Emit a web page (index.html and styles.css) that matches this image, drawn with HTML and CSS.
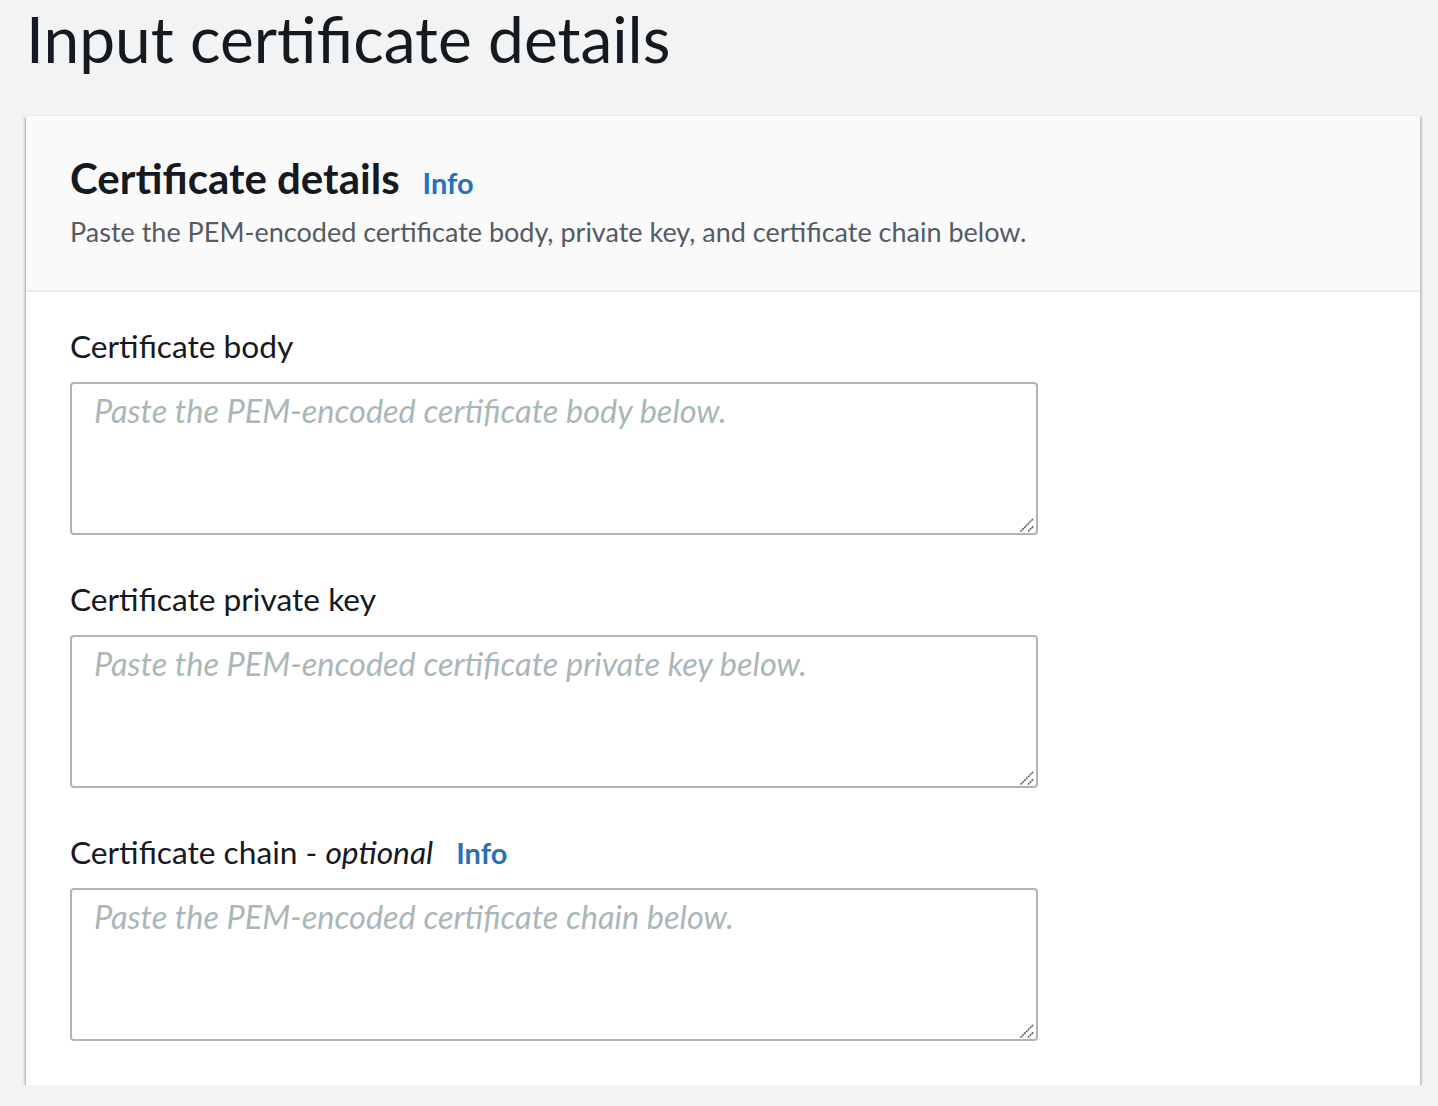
FILE: index.html
```html
<!DOCTYPE html>
<html lang="en">
<head>
<meta charset="utf-8">
<title>Input certificate details</title>
<link rel="stylesheet" href="styles.css">
</head>
<body>
<main class="page">
  <h1 class="page-title">Input certificate details</h1>
  <section class="card">
    <header class="card-header">
      <div class="card-title-row">
        <h2 class="card-title">Certificate details</h2>
        <a class="info-link" href="#">Info</a>
      </div>
      <p class="card-desc">Paste the PEM-encoded certificate body, private key, and certificate chain below.</p>
    </header>
    <div class="card-body">
      <div class="field">
        <label class="field-label" for="body">Certificate body</label>
        <div class="input-wrap">
          <textarea id="body" class="field-input" placeholder="Paste the PEM-encoded certificate body below."></textarea>
          <svg class="resize-grip" width="16" height="16" viewBox="0 0 16 16" aria-hidden="true"><path d="M1.5 14.5 L14.5 1.5 M9 14.5 L14.5 9" stroke="#5f6262" stroke-width="1.6" stroke-dasharray="2 0.6" fill="none"/></svg>
        </div>
      </div>
      <div class="field">
        <label class="field-label" for="key">Certificate private key</label>
        <div class="input-wrap">
          <textarea id="key" class="field-input" placeholder="Paste the PEM-encoded certificate private key below."></textarea>
          <svg class="resize-grip" width="16" height="16" viewBox="0 0 16 16" aria-hidden="true"><path d="M1.5 14.5 L14.5 1.5 M9 14.5 L14.5 9" stroke="#5f6262" stroke-width="1.6" stroke-dasharray="2 0.6" fill="none"/></svg>
        </div>
      </div>
      <div class="field">
        <div class="field-label-row">
          <label class="field-label" for="chain">Certificate chain - <i>optional</i></label>
          <a class="info-link" href="#">Info</a>
        </div>
        <div class="input-wrap">
          <textarea id="chain" class="field-input" placeholder="Paste the PEM-encoded certificate chain below."></textarea>
          <svg class="resize-grip" width="16" height="16" viewBox="0 0 16 16" aria-hidden="true"><path d="M1.5 14.5 L14.5 1.5 M9 14.5 L14.5 9" stroke="#5f6262" stroke-width="1.6" stroke-dasharray="2 0.6" fill="none"/></svg>
        </div>
      </div>
    </div>
  </section>
</main>
</body>
</html>
```

FILE: styles.css
```css
html, body {
  margin: 0;
  padding: 0;
  background: #f2f3f3;
}
body {
  font-family: Lato, "Open Sans", sans-serif;
  color: #16191f;
}
.page {
  padding: 0 18px 0 26px;
}
.page-title {
  box-sizing: border-box;
  margin: 0;
  padding-top: 3px;
  font-size: 64px;
  font-weight: 400;
  line-height: 72px;
  height: 115px;
}
.card {
  background: #fff;
  border-top: 1px solid #eaeded;
  box-shadow: 0 2px 2px rgba(0, 28, 36, 0.3), 2px 2px 2px rgba(0, 28, 36, 0.15), -2px 2px 2px rgba(0, 28, 36, 0.15);
}
.card-header {
  background: #fafafa;
  border-bottom: 2px solid #eaeded;
  padding: 36px 44px 38px 44px;
}
.card-title-row {
  display: flex;
  align-items: baseline;
  gap: 23px;
}
.card-title {
  margin: 0;
  font-size: 42px;
  font-weight: 700;
  line-height: 52px;
}
.info-link {
  color: #2b71b8;
  font-weight: 700;
  font-size: 29px;
  text-decoration: none;
}
.card-desc {
  margin: 8px 0 0;
  font-size: 27px;
  line-height: 40px;
  color: #545b64;
}
.card-body {
  padding: 34px 44px 44px 44px;
  display: flex;
  flex-direction: column;
  gap: 44px;
}
.field {
  display: flex;
  flex-direction: column;
  gap: 16px;
}
.field-label-row {
  display: flex;
  align-items: baseline;
  gap: 23px;
}
.field-label {
  font-size: 31.7px;
  line-height: 40px;
}
.input-wrap {
  position: relative;
  width: 968px;
  height: 153px;
}
.field-input {
  display: block;
  box-sizing: border-box;
  width: 968px;
  height: 153px;
  border: 2px solid #aab7b8;
  border-radius: 4px;
  padding: 7px 22px;
  font-family: Lato, "Open Sans", sans-serif;
  font-size: 32.5px;
  line-height: 40px;
  color: #16191f;
  background: #fff;
  resize: none;
  margin: 0;
  outline: none;
}
.field-input::placeholder {
  color: #aab7b8;
  font-style: italic;
}
.resize-grip {
  position: absolute;
  right: 3px;
  bottom: 2px;
  pointer-events: none;
}
```
